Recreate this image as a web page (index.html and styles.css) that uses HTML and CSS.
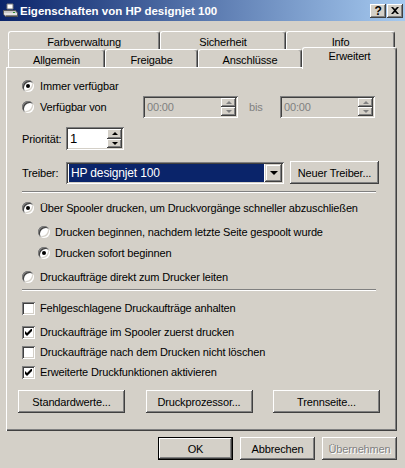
FILE: index.html
```html
<!DOCTYPE html>
<html>
<head>
    <title>Eigenschaften von HP designjet 100</title>
    <link rel="stylesheet" href="styles.css">
</head>
<body>
    <div class="window">
        <div class="titlebar">
            <svg class="title-icon" width="16" height="16" viewBox="0 0 16 16">
                <path d="M5 1 L11 1 L11 6 L5 6 Z" fill="#ffffff" stroke="#7a7a7a" stroke-width="1"/>
                <path d="M1.5 7.5 L13.5 7.5 L15.5 10 L15.5 13.5 L3.5 13.5 L1.5 11 Z" fill="#c8c8c8" stroke="#5a5a5a" stroke-width="1"/>
                <path d="M2 11 L15 11" stroke="#ffffff" stroke-width="1"/>
                <path d="M4 13 L15 13" stroke="#3c3c3c" stroke-width="1"/>
                <rect x="11" y="9" width="2" height="1" fill="#2a8a2a"/>
            </svg>
            <span class="title-text">Eigenschaften von HP designjet 100</span>
            <div class="caption-buttons">
                <div class="cap-btn help">?</div>
                <div class="cap-btn">
                    <svg width="8" height="7" viewBox="0 0 8 7">
                        <path d="M0 0 H2 L4 2 L6 0 H8 L5 3.5 L8 7 H6 L4 5 L2 7 H0 L3 3.5 Z" fill="#000"/>
                    </svg>
                </div>
            </div>
        </div>

        <!-- Tabs -->
        <div class="tabs">
            <div class="tab-row back">
                <div class="tab tab-farb">Farbverwaltung</div>
                <div class="tab tab-sich">Sicherheit</div>
                <div class="tab tab-info">Info</div>
            </div>
            <div class="tab-row front">
                <div class="tab tab-allg">Allgemein</div>
                <div class="tab tab-frei">Freigabe</div>
                <div class="tab tab-ansc">Anschlüsse</div>
                <div class="tab tab-erw active">Erweitert</div>
            </div>
        </div>

        <div class="panel">
            <div class="row row-immer">
                <span class="radio checked"></span>
                <span class="label">Immer verfügbar</span>
            </div>
            <div class="row row-von">
                <div class="radio-cell">
                    <span class="radio"></span>
                    <span class="label">Verfügbar von</span>
                </div>
                <div class="field time disabled">
                    <span class="field-text">00:00</span>
                    <div class="spin">
                        <div class="spin-btn"><span class="arrow-up"></span></div>
                        <div class="spin-btn"><span class="arrow-down"></span></div>
                    </div>
                </div>
                <span class="label bis">bis</span>
                <div class="field time disabled">
                    <span class="field-text">00:00</span>
                    <div class="spin">
                        <div class="spin-btn"><span class="arrow-up"></span></div>
                        <div class="spin-btn"><span class="arrow-down"></span></div>
                    </div>
                </div>
            </div>
            <div class="row row-prio">
                <span class="label field-label">Priorität:</span>
                <div class="field prio">
                    <span class="field-text">1</span>
                    <div class="spin">
                        <div class="spin-btn"><span class="arrow-up"></span></div>
                        <div class="spin-btn"><span class="arrow-down"></span></div>
                    </div>
                </div>
            </div>
            <div class="row row-treiber">
                <span class="label field-label">Treiber:</span>
                <div class="field combo">
                    <span class="combo-value">HP designjet 100</span>
                    <div class="combo-btn"><span class="arrow-combo"></span></div>
                </div>
                <div class="btn btn-neu">Neuer Treiber...</div>
            </div>

            <div class="separator sep-1"></div>

            <div class="row row-spool">
                <span class="radio checked"></span>
                <span class="label">Über Spooler drucken, um Druckvorgänge schneller abzuschließen</span>
            </div>
            <div class="row sub row-sub1">
                <span class="radio"></span>
                <span class="label">Drucken beginnen, nachdem letzte Seite gespoolt wurde</span>
            </div>
            <div class="row sub row-sub2">
                <span class="radio checked"></span>
                <span class="label">Drucken sofort beginnen</span>
            </div>
            <div class="row row-direkt">
                <span class="radio"></span>
                <span class="label">Druckaufträge direkt zum Drucker leiten</span>
            </div>

            <div class="separator sep-2"></div>

            <div class="row row-c1">
                <span class="check"></span>
                <span class="label">Fehlgeschlagene Druckaufträge anhalten</span>
            </div>
            <div class="row row-c2">
                <span class="check checked">
                    <svg width="7" height="7" viewBox="0 0 7 7"><path d="M0 2 L2 4 L7 -1 L7 2 L2 7 L0 5 Z" fill="#000"/></svg>
                </span>
                <span class="label">Druckaufträge im Spooler zuerst drucken</span>
            </div>
            <div class="row row-c3">
                <span class="check"></span>
                <span class="label">Druckaufträge nach dem Drucken nicht löschen</span>
            </div>
            <div class="row row-c4">
                <span class="check checked">
                    <svg width="7" height="7" viewBox="0 0 7 7"><path d="M0 2 L2 4 L7 -1 L7 2 L2 7 L0 5 Z" fill="#000"/></svg>
                </span>
                <span class="label">Erweiterte Druckfunktionen aktivieren</span>
            </div>

            <div class="panel-buttons">
                <div class="btn btn-wide">Standardwerte...</div>
                <div class="btn btn-wide">Druckprozessor...</div>
                <div class="btn btn-wide">Trennseite...</div>
            </div>
        </div>

        <div class="dialog-buttons">
            <div class="btn btn-dlg default">OK</div>
            <div class="btn btn-dlg">Abbrechen</div>
            <div class="btn btn-dlg disabled">Übernehmen</div>
        </div>
    </div>
</body>
</html>
```

FILE: styles.css
```css
/* Classic dialog look */
* {
    margin: 0;
    padding: 0;
    box-sizing: border-box;
}

html, body {
    width: 100%;
    height: 100%;
    overflow: hidden;
    background-color: #d4d0c8;
}

body {
    font-family: 'Liberation Sans', Arial, sans-serif;
    font-size: 11px;
    letter-spacing: -0.15px;
    color: #000000;
}

.window {
    width: 405px;
    height: 468px;
}

/* Title bar */
.titlebar {
    height: 21px;
    display: flex;
    align-items: center;
    padding-left: 2px;
    background: linear-gradient(to right, #0a246a, #a6caf0);
}

.title-icon {
    flex: none;
    margin-top: 1px;
}

.title-text {
    margin-left: 2px;
    color: #ffffff;
    font-weight: bold;
    font-size: 11.5px;
    letter-spacing: 0;
    white-space: nowrap;
}

.caption-buttons {
    display: flex;
    gap: 1px;
    margin-left: auto;
    margin-right: 2px;
}

.cap-btn {
    width: 16px;
    height: 14px;
    display: flex;
    justify-content: center;
    align-items: center;
    background: #d4d0c8;
    box-shadow: inset -1px -1px #404040, inset 1px 1px #ffffff, inset -2px -2px #808080, inset 2px 2px #d4d0c8;
}

.cap-btn.help {
    font-weight: bold;
    font-size: 12px;
    line-height: 14px;
}

/* Tabs */
.tabs {
    margin-top: 10px;
    padding-left: 8px;
}

.tab-row {
    display: flex;
    height: 18px;
}

.tab {
    height: 18px;
    display: flex;
    justify-content: center;
    align-items: center;
    padding-top: 2px;
    background: #d4d0c8;
    border-top: 1px solid #ffffff;
    border-left: 1px solid #ffffff;
    border-right: 1px solid #404040;
    box-shadow: inset -1px 0 #808080;
    border-radius: 3px 3px 0 0;
    white-space: nowrap;
}

.tab-farb { width: 152px; }
.tab-sich { width: 126px; }
.tab-info { width: 109px; }
.tab-allg { width: 97px; }
.tab-frei { width: 93px; }
.tab-ansc { width: 104px; }
.tab-erw { width: 95px; }

.tab.active {
    position: relative;
    z-index: 2;
    height: 22px;
    margin-top: -2px;
    align-items: flex-start;
    padding-top: 2px;
}

/* Main panel */
.panel {
    margin-left: 6px;
    width: 391px;
    height: 364px;
    padding: 2px 16px 0 16px;
    box-shadow: inset 1px 1px #ffffff, inset -1px -1px #404040, inset -2px -2px #808080;
}

.row {
    display: flex;
    align-items: center;
    height: 20px;
    white-space: nowrap;
}

.row .label {
    margin-left: 6px;
}

.row-immer { margin-top: 7px; }
.row-von { height: 22px; }
.row-prio { height: 23px; margin-top: 9px; }
.row-treiber { height: 23px; margin-top: 11px; }
.row-spool { margin-top: 5px; }
.row-sub1 { margin-top: 4px; }
.row-sub2 { margin-top: 1px; }
.row-direkt { margin-top: 4px; }
.row-c1 { margin-top: 7px; }
.row-c2 { margin-top: 4px; }

.row.sub {
    padding-left: 16px;
}

.row.sub .label {
    margin-left: 5px;
}

.radio-cell {
    width: 121px;
    display: flex;
    align-items: center;
}

.row .field-label {
    margin-left: 0;
    width: 44px;
}

.row .bis {
    margin-left: 11px;
    width: 31px;
    color: #808080;
}

/* Radio buttons and checkboxes */
.radio {
    flex: none;
    position: relative;
    width: 12px;
    height: 12px;
    border-radius: 50%;
    background: #ffffff;
    box-shadow: inset 1px 1px #808080, inset -1px -1px #ffffff, inset 2px 2px #404040, inset -2px -2px #d4d0c8;
}

.radio.checked::after {
    content: "";
    position: absolute;
    left: 4px;
    top: 4px;
    width: 4px;
    height: 4px;
    border-radius: 50%;
    background: #000000;
}

.check {
    flex: none;
    width: 13px;
    height: 13px;
    display: flex;
    justify-content: center;
    align-items: center;
    background: #ffffff;
    box-shadow: inset 1px 1px #808080, inset -1px -1px #ffffff, inset 2px 2px #404040, inset -2px -2px #d4d0c8;
}

.check + .label {
    margin-left: 5px;
}

/* Sunken fields */
.field {
    display: flex;
    align-items: center;
    height: 22px;
    padding: 2px;
    background: #ffffff;
    box-shadow: inset 1px 1px #808080, inset -1px -1px #ffffff, inset 2px 2px #404040, inset -2px -2px #d4d0c8;
}

.field.disabled {
    background: #d4d0c8;
    color: #808080;
}

.field-text {
    flex: 1;
    padding-left: 2px;
}

.field.time {
    width: 95px;
}

.field.prio {
    width: 58px;
    height: 23px;
}

.field.prio .field-text {
    font-size: 13px;
}

.spin {
    display: flex;
    flex-direction: column;
    width: 15px;
    height: 100%;
}

.spin-btn {
    flex: 1;
    display: flex;
    justify-content: center;
    align-items: center;
    background: #d4d0c8;
    box-shadow: inset -1px -1px #404040, inset 1px 1px #ffffff, inset -2px -2px #808080;
}

.arrow-up,
.arrow-down {
    width: 0;
    height: 0;
    border-left: 3px solid transparent;
    border-right: 3px solid transparent;
}

.arrow-up {
    border-bottom: 3px solid #000000;
}

.arrow-down {
    border-top: 3px solid #000000;
}

.field.disabled .arrow-up {
    border-bottom-color: #808080;
}

.field.disabled .arrow-down {
    border-top-color: #808080;
}

/* Combo box */
.field.combo {
    width: 218px;
    padding: 2px;
}

.combo-value {
    flex: 1;
    height: 100%;
    display: flex;
    align-items: center;
    margin: 1px;
    padding-left: 2px;
    background: #0a246a;
    color: #ffffff;
    font-size: 12px;
}

.combo-btn {
    width: 17px;
    height: 100%;
    display: flex;
    justify-content: center;
    align-items: center;
    background: #d4d0c8;
    box-shadow: inset -1px -1px #404040, inset 1px 1px #d4d0c8, inset -2px -2px #808080, inset 2px 2px #ffffff;
}

.arrow-combo {
    width: 0;
    height: 0;
    border-left: 4px solid transparent;
    border-right: 4px solid transparent;
    border-top: 4px solid #000000;
}

/* Push buttons */
.btn {
    display: flex;
    justify-content: center;
    align-items: center;
    height: 23px;
    background: #d4d0c8;
    white-space: nowrap;
    box-shadow: inset -1px -1px #404040, inset 1px 1px #ffffff, inset -2px -2px #808080, inset 2px 2px #d4d0c8;
}

.btn-neu {
    width: 89px;
    margin-left: 6px;
}

.btn-wide {
    width: 107px;
}

.panel-buttons {
    display: flex;
    justify-content: space-between;
    width: 362px;
    margin-left: -4px;
    margin-top: 8px;
}

.separator {
    width: 354px;
    height: 2px;
    border-top: 1px solid #808080;
    border-bottom: 1px solid #ffffff;
}

.sep-1 { margin-top: 7px; }
.sep-2 { margin-top: 2px; }

/* Dialog buttons */
.dialog-buttons {
    display: flex;
    justify-content: flex-end;
    gap: 7px;
    margin-top: 6px;
    padding-right: 8px;
}

.btn-dlg {
    width: 75px;
}

.btn-dlg.default {
    border: 1px solid #000000;
}

.btn-dlg.disabled {
    color: #808080;
    text-shadow: 1px 1px #ffffff;
}
```
